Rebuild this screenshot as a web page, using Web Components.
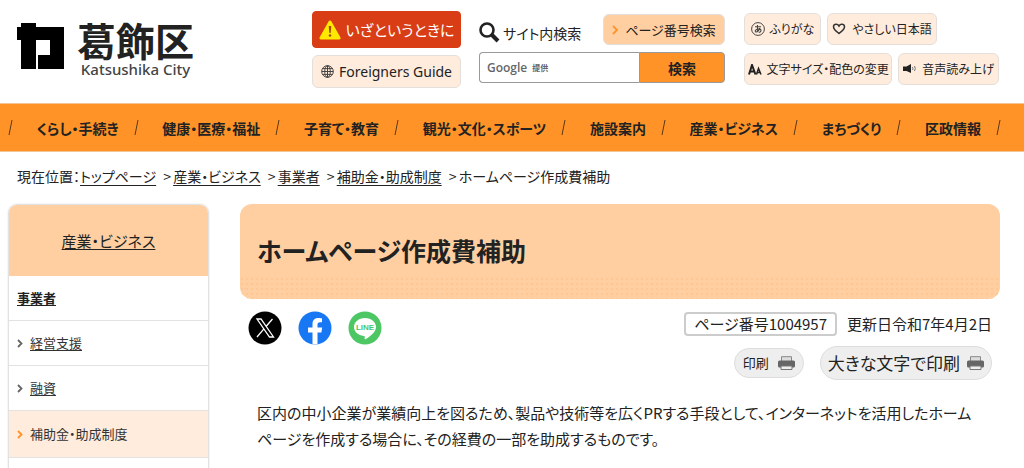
<!DOCTYPE html>
<html lang="ja">
<head>
<meta charset="utf-8">
<meta name="viewport" content="width=device-width, initial-scale=1">
<title>ホームページ作成費補助 - 葛飾区</title>
<style>
:root{--orange:#ff9328;--light:#ffcfa1;--pale:#ffecdd;--line:#e2e2e2;--text:#222}
body{margin:0;background:#fff;color:var(--text);font:15px/26px "Noto Sans CJK JP",sans-serif;font-feature-settings:"palt"}
</style>
</head>
<body>
<katsu-page></katsu-page>
<script>
const base = `<style>*{box-sizing:border-box}a{color:inherit}svg{display:block;flex:none}ul,ol{list-style:none;margin:0;padding:0}button,input{font:inherit;color:inherit;font-feature-settings:inherit}</style>`;
function component(name, html) {
  const template = document.createElement("template");
  template.innerHTML = base + html;
  customElements.define(name, class extends HTMLElement {
    constructor() {
      super();
      this.attachShadow({ mode: "open" }).append(template.content.cloneNode(true));
    }
  });
}

component("site-logo", `
<style>
:host{display:block}
a{display:flex;align-items:flex-start;gap:12px;text-decoration:none}
svg{margin-top:6px}
.name{display:block;font-size:39px;line-height:44px;font-weight:700;font-feature-settings:normal}
.en{display:block;font:500 15px/16px "Noto Sans",sans-serif;text-align:center;color:#444}
</style>
<a href="#">
<svg width="48" height="47" viewBox="0 0 48 47" aria-hidden="true"><path fill="#000" d="M4 0H19V4H47V46H21V32H33V17H19V46H4V17H0V4H4Z"/></svg>
<span><span class="name">葛飾区</span><span class="en">Katsushika City</span></span>
</a>`);

component("tool-button", `
<style>
:host{display:block}
a{display:flex;align-items:center;justify-content:center;gap:5px;height:32px;border:1px solid #e4dfdb;border-radius:6px;background:var(--pale);font-size:12px;line-height:20px;text-decoration:none;white-space:nowrap}
:host([kind=alert]) a{height:37px;background:#d93d15;border-color:#d93d15;border-radius:4px;color:#fff;font-size:15px}
:host([kind=guide]) a{height:33px;font:14px/20px "Noto Sans",sans-serif}
:host([kind=number]) a{height:31px;background:var(--light);font-size:13px}
</style>
<a href="#"><slot name="icon"></slot><span><slot></slot></span></a>`);

component("site-search", `
<style>
:host{display:block}
.top{display:flex;justify-content:space-between;align-items:center;height:37px}
label{display:flex;align-items:center;gap:3px;font-size:14px;line-height:20px;padding-top:6px}
form{display:flex;height:31px;margin:4px 0 0}
.box{display:flex;align-items:center;flex:1;min-width:0;border:1px solid #999;border-right:0;border-radius:4px 0 0 4px;padding:0 4px 0 7px;gap:5px;color:#666}
.g{font:600 12px/16px "Open Sans",sans-serif}
.p{font-size:8px;line-height:12px;font-weight:700}
input{flex:1;min-width:0;border:0;outline:0;background:none;padding:0}
button{width:86px;border:1px solid #999;border-radius:0 4px 4px 0;background:var(--orange);font-size:14px;font-weight:700;padding:0}
tool-button{width:122px}
</style>
<div class="top">
<label for="q"><svg width="21" height="21" viewBox="0 0 21 21" fill="none" stroke="#222"><circle cx="8" cy="8" r="6.5" stroke-width="2.6"/><path d="M13 13l6 6" stroke-width="4"/></svg>サイト内検索</label>
<tool-button kind="number"><svg slot="icon" width="8" height="10" viewBox="0 0 8 10" fill="none" stroke="#ff9328" stroke-width="1.8"><path d="M1 1l4 4-4 4"/></svg>ページ番号検索</tool-button>
</div>
<form><div class="box"><span class="g">Google</span><span class="p">提供</span><input id="q" type="text"></div><button type="button">検索</button></form>`);

component("site-header", `
<style>
:host{display:grid;grid-template-columns:minmax(0,1fr) 149px 246px 256px;column-gap:18px;padding:11px 25px 15px 17px}
site-logo{padding-top:6px}
.guide{display:flex;flex-direction:column;gap:7px}
.tools{display:flex;flex-direction:column;gap:8px;padding:2px 0 0 1px}
.row{display:flex;gap:6px}
.w1{width:77px}.w2{width:110px}.w3{width:149px}.w4{width:101px}
</style>
<site-logo></site-logo>
<div class="guide">
<tool-button kind="alert"><svg slot="icon" width="22" height="20" viewBox="0 0 22 20"><path d="M11 2L20 18H2Z" fill="#ffe800" stroke="#ffe800" stroke-width="3" stroke-linejoin="round"/><path d="M9.700 6h2.600l-.6 7h-1.400z" fill="#a84a10"/><circle cx="11" cy="15.500" r="1.300" fill="#a84a10"/></svg>いざというときに</tool-button>
<tool-button kind="guide"><svg slot="icon" width="13" height="13" viewBox="0 0 13 13" fill="none" stroke="#444" stroke-width="1"><circle cx="6.500" cy="6.500" r="5.800"/><ellipse cx="6.500" cy="6.500" rx="2.800" ry="5.800"/><path d="M6.500 .7v11.600M.7 6.500h11.600M1.500 3.600h10M1.500 9.400h10"/></svg>Foreigners Guide</tool-button>
</div>
<site-search></site-search>
<div class="tools">
<div class="row">
<tool-button class="w1"><svg slot="icon" width="14" height="14" viewBox="0 0 14 14" fill="none" stroke="#444"><circle cx="7" cy="7" r="6.400"/><path d="M4 4.800h6M6.500 3c-.3 2.500-.2 4.600.5 7M9 5.800C8 9 5.500 10.500 4.500 9.700 3.300 8.500 6 6.800 8 7c3 .4 2.500 3-.2 3.500" stroke-width="1.100"/></svg>ふりがな</tool-button>
<tool-button class="w2"><svg slot="icon" width="15" height="12" viewBox="0 0 15 12" fill="none" stroke="#333" stroke-width="1.500"><path d="M7 10.500C2.500 7 1.500 5.500 1.500 3.900c0-3 3.800-3.700 5.500-.9 1.700-2.800 5.500-2.100 5.500.9 0 1.600-1 3.100-5.500 6.600z"/></svg>やさしい日本語</tool-button>
</div>
<div class="row">
<tool-button class="w3"><svg slot="icon" width="14" height="11" viewBox="0 0 14 11" fill="none" stroke="#222"><path d="M1 10.500L4 1l3.500 9.500M2 7.500h4.500" stroke-width="2"/><path d="M8.500 10.500l2-6 2.500 6M9 8.500h3.500" stroke-width="1.500"/></svg>文字サイズ・配色の変更</tool-button>
<tool-button class="w4"><svg slot="icon" width="14" height="10" viewBox="0 0 14 10"><path d="M0 2.500h3.500L8 0v9L3.500 7H0z" fill="#222"/><path d="M9.500 3q1 1.500 0 3M11.500 2q1.600 2.500 0 5" fill="none" stroke="#777"/></svg>音声読み上げ</tool-button>
</div>
</div>`);

component("nav-item", `
<style>
:host{display:flex;align-items:center;gap:15px;white-space:nowrap}
a{text-decoration:none;font-size:14px;line-height:24px;font-weight:700}
</style>
<a href="#"><slot></slot></a><svg width="5" height="15" viewBox="0 0 5 15" stroke="#5a3918" fill="none"><path d="M4 0L1 15"/></svg>`);

component("site-nav", `
<style>
:host{display:block;background:var(--orange);border:solid #f2c496;border-width:1px 0}
nav{display:flex;align-items:center;justify-content:space-between;height:47px;padding:0 23px 0 8px}
</style>
<nav><svg width="5" height="15" viewBox="0 0 5 15" stroke="#5a3918" fill="none"><path d="M4 0L1 15"/></svg><nav-item>くらし・手続き</nav-item><nav-item>健康・医療・福祉</nav-item><nav-item>子育て・教育</nav-item><nav-item>観光・文化・スポーツ</nav-item><nav-item>施設案内</nav-item><nav-item>産業・ビジネス</nav-item><nav-item>まちづくり</nav-item><nav-item>区政情報</nav-item></nav>`);

component("bread-crumb", `
<style>
:host{display:block;padding:12px 17px 16px;font-size:14px;line-height:24px}
ol{display:flex;flex-wrap:wrap}
a{text-underline-offset:3px}
.gt{display:inline-block;width:12px;margin-left:5px;text-align:center}
</style>
<ol><li>現在位置：</li><li><a href="#">トップページ</a><span class="gt">&gt;</span></li><li><a href="#">産業・ビジネス</a><span class="gt">&gt;</span></li><li><a href="#">事業者</a><span class="gt">&gt;</span></li><li><a href="#">補助金・助成制度</a><span class="gt">&gt;</span></li><li>ホームページ作成費補助</li></ol>`);

component("side-item", `
<style>
:host{display:flex;align-items:center;gap:7px;height:45px;padding:0 8px;border-bottom:1px solid var(--line);font-size:13px;line-height:24px;color:#333}
:host([current]){background:var(--pale);height:47px}
svg{color:#666}
:host([current]) svg{color:var(--orange)}
</style>
<svg width="6" height="9" viewBox="0 0 6 9" fill="none" stroke="currentColor" stroke-width="1.800"><path d="M1 1l3.500 3.500L1 8"/></svg><slot></slot>`);

component("side-menu", `
<style>
:host{display:block;border:1px solid var(--line);border-bottom:0;border-radius:9px 9px 0 0;box-shadow:0 0 2px #ddd;overflow:hidden}
.head{display:flex;align-items:center;justify-content:center;height:71px;background:var(--light);font-size:15px}
.cat{display:flex;align-items:center;height:45px;padding:0 8px;border-bottom:1px solid var(--line);font-size:13px;font-weight:700}
a{text-underline-offset:2px}
</style>
<div class="head"><a href="#">産業・ビジネス</a></div>
<div class="cat"><a href="#">事業者</a></div>
<side-item><a href="#">経営支援</a></side-item>
<side-item><a href="#">融資</a></side-item>
<side-item current>補助金・助成制度</side-item>`);

component("page-title", `
<style>
:host{display:block;border-radius:12px;overflow:hidden;background:var(--light)}
h1{margin:0;padding:28px 17px 9px;font-size:25px;line-height:36px;font-weight:700}
.dots{height:22px;background:radial-gradient(circle at 2px 2px,#fdc692 1px,transparent 1px) 0 0/5px 5px}
</style>
<h1><slot></slot></h1><div class="dots"></div>`);

component("share-links", `
<style>
:host{display:flex;gap:16px}
a{display:block}
text{font:700 8px "Liberation Sans",sans-serif}
</style>
<a href="#" aria-label="X"><svg width="34" height="34" viewBox="0 0 34 34"><circle cx="17" cy="17" r="16.500"/><path d="M9 8h4l12.500 18h-4zM24.500 8l-6.700 7.700M15.700 18.200L9 26" fill="none" stroke="#fff" stroke-width="1.300"/></svg></a>
<a href="#" aria-label="Facebook"><svg width="34" height="34" viewBox="0 0 34 34"><circle cx="17" cy="17" r="16.500" fill="#1877f2"/><path d="M14.500 33.300V21.500H10v-5h4.500v-3.700C14.500 8.800 17 7 20.500 7c1.500 0 3.500.3 3.500.3v4h-2c-2 0-2.500 1.200-2.500 2.500v2.700h4.700l-.8 5h-3.900v11.800z" fill="#fff"/></svg></a>
<a href="#" aria-label="LINE"><svg width="34" height="34" viewBox="0 0 34 34"><circle cx="17" cy="17" r="16.500" fill="#4cc764"/><path d="M17 7c6.300 0 11 4 11 9 0 5-6.200 9.800-10.500 12.200-.8.400-1-.2-.8-1.200.2-1.200.3-2-.9-2.100C10 24.300 6 20.700 6 16c0-5 4.700-9 11-9z" fill="#fff"/><text x="17" y="19" text-anchor="middle" fill="#4cc764">LINE</text></svg></a>`);

component("print-button", `
<style>
:host{display:block}
button{display:flex;align-items:center;gap:9px;height:30px;padding:0 8px;border:1px solid #ddd;border-radius:17px;background:#eee;font-size:13px;line-height:20px}
:host([large]) button{height:34px;font-size:17px;gap:7px;padding:0 7px}
</style>
<button type="button"><slot></slot><svg width="17" height="14" viewBox="0 0 17 14"><path d="M3.500 5V.7h10V5" fill="#ddd" stroke="#888"/><rect y="4.500" width="17" height="7" rx="1.500" fill="#666"/><path d="M3 10h11v3.500H3z" fill="#eee" stroke="#777"/></svg></button>`);

component("page-info", `
<style>
:host{display:flex;flex-direction:column;align-items:flex-end;gap:10px}
.meta,.print{display:flex;align-items:center;white-space:nowrap}
.meta{gap:10px;font-size:15px;line-height:24px}
.number{height:24px;line-height:20px;padding:0 8px;border:2px solid #ccc;border-radius:4px}
.print{gap:16px}
</style>
<div class="meta"><span class="number">ページ番号1004957</span><span>更新日令和7年4月2日</span></div>
<div class="print"><print-button>印刷</print-button><print-button large>大きな文字で印刷</print-button></div>`);

component("katsu-page", `
<style>
:host{display:flex;flex-direction:column;min-height:100vh}
.body{flex:1;display:grid;grid-template-columns:201px minmax(0,1fr);column-gap:31px;padding:0 24px 0 8px}
.bar{display:flex;justify-content:space-between;padding:13px 8px 0}
share-links{margin-top:-1px}
p{margin:20px 17px 0;font-size:15px;line-height:26px}
</style>
<site-header></site-header>
<site-nav></site-nav>
<bread-crumb></bread-crumb>
<div class="body">
<side-menu></side-menu>
<main>
<page-title>ホームページ作成費補助</page-title>
<div class="bar"><share-links></share-links><page-info></page-info></div>
<p>区内の中小企業が業績向上を図るため、製品や技術等を広くPRする手段として、インターネットを活用したホームページを作成する場合に、その経費の一部を助成するものです。</p>
</main>
</div>`);
</script>
</body>
</html>
